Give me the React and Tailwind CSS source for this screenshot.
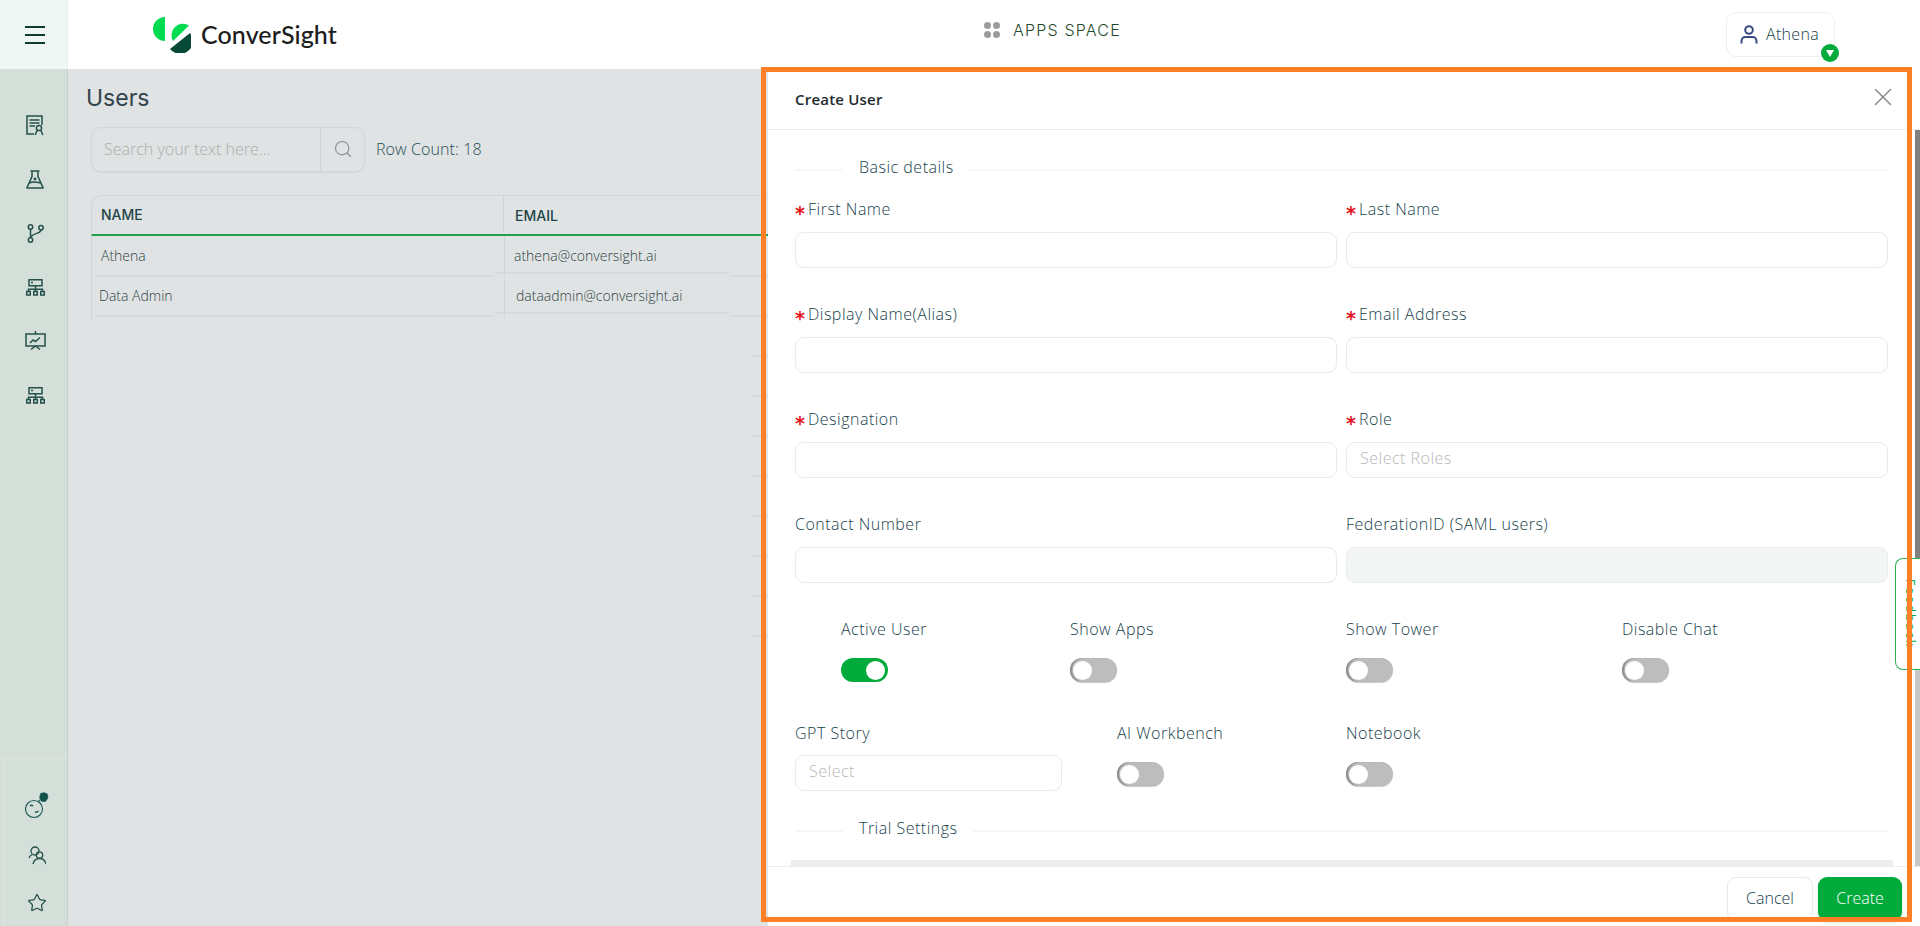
import React from "react";
import { Search, X, Star } from "lucide-react";

const iconCls = "text-[#23504a]";

const DocAward = () => (
  <svg width="18" height="21" viewBox="0 0 18 21" fill="none" stroke="currentColor" strokeWidth="1.5" className={iconCls}>
    <path d="M8 19H1V1h15v9" />
    <path d="M3.5 5h10M3.5 8h10M3.5 11h5.5" />
    <circle cx="13" cy="13" r="2.6" />
    <path d="M11 15.5L9.2 20M15 15.5L16.8 20" />
  </svg>
);
const Flask = () => (
  <svg width="18" height="19" viewBox="0 0 18 19" fill="none" stroke="currentColor" strokeWidth="1.5" className={iconCls}>
    <path d="M4.5 1h9M6 1v5.5L1 17.5a.3.3 0 0 0 .3.5h15.4a.3.3 0 0 0 .3-.5L12 6.5V1" />
    <path d="M3.5 13c3-1.5 7-1 11 0" />
    <circle cx="9" cy="9" r=".7" fill="currentColor" />
  </svg>
);
const Branch = () => (
  <svg width="17" height="19" viewBox="0 0 17 19" fill="none" stroke="currentColor" strokeWidth="1.5" className={iconCls}>
    <circle cx="3.5" cy="3" r="2.2" />
    <circle cx="14" cy="3.8" r="2.2" />
    <circle cx="3.5" cy="16" r="2.2" />
    <path d="M3.5 5.2v8.6M14 6c0 4-8 2.500-10.500 7.500" />
  </svg>
);
const Sitemap = () => (
  <svg width="19" height="17" viewBox="0 0 19 17" fill="none" stroke="currentColor" strokeWidth="1.5" className={iconCls}>
    <rect x="3" y=".75" width="13" height="6" />
    <path d="M5 3.500h2M9.500 6.750v6M2.500 13v-2.700h14V13" />
    <rect x=".75" y="12.500" width="3.500" height="3.500" />
    <rect x="7.750" y="12.500" width="3.500" height="3.500" />
    <rect x="14.750" y="12.500" width="3.500" height="3.500" />
  </svg>
);
const Board = () => (
  <svg width="21" height="20" viewBox="0 0 21 20" fill="none" stroke="currentColor" strokeWidth="1.5" className={iconCls}>
    <rect x="1" y="3" width="19" height="12" />
    <path d="M10.500 0v3M10.500 15l-4.500 3.500M10.500 15l4.500 3.500" />
    <path d="M5 12l3-3 2.500 1.500L15 6.500" />
  </svg>
);
const Face = () => (
  <svg width="24" height="27" viewBox="0 0 24 27" fill="none" stroke="#1c5a55" strokeWidth="1.1">
    <circle cx="9" cy="17" r="8.500" />
    <path d="M5 14c1-1 2-1 3 0M10 20c1.500.5 2.500 0 3.500-1" strokeWidth="1.4" />
    <path d="M13 10l2.500-2.500" />
    <path d="M14.500 5.500L15.500 1.500 19 .5 22.500 2l.5 4-2.500 3.500h-4z" fill="#12524b" strokeWidth=".5" />
  </svg>
);
const People = () => (
  <svg width="18" height="19" viewBox="0 0 18 19" fill="none" stroke="#23504a" strokeWidth="1.3">
    <circle cx="7" cy="5" r="4" />
    <path d="M1 12c.5-2 2-3 3.500-3.500" />
    <circle cx="11.500" cy="9" r="3.200" />
    <path d="M5 18c.8-3.500 3-5.500 6.500-5.500s5.700 2 6.500 5.500" />
  </svg>
);
const UserIcon = () => (
  <svg width="18" height="19" viewBox="0 0 18 19" fill="none" stroke="#3b4a80" strokeWidth="2">
    <circle cx="9" cy="5" r="3.800" />
    <path d="M1.500 18.500v-2.500c0-2.500 2-4 4-4h7c2 0 4 1.500 4 4v2.500" />
  </svg>
);
const Logo = () => (
  <svg width="38" height="37" viewBox="0 0 38 37">
    <path d="M12 1A12 12 0 0 0 12 25Z" fill="#00db50" />
    <path d="M36 9.500A11.500 11.500 0 0 0 20 25Z" fill="#00db50" />
    <path d="M37 17L17 33A12.500 12.500 0 0 0 37 17Z" fill="#064a37" />
  </svg>
);

const Toggle = ({ on }) =>
  on ? (
    <div className="flex h-[24px] w-[47px] items-center justify-end rounded-full bg-[#00ab3c] pr-[3px]">
      <div className="h-[19px] w-[19px] rounded-full bg-white" />
    </div>
  ) : (
    <div className="flex h-[24px] w-[47px] items-center rounded-full bg-[#bdbdbd] pl-[3px] shadow-[inset_2px_0_1px_#8f8f8f,0_1px_1px_#ccc]">
      <div className="h-[19px] w-[19px] rounded-full bg-white" />
    </div>
  );

const Label = ({ children, req }) => (
  <div className="flex h-[20px] items-center whitespace-nowrap text-[16px] font-light leading-[20px] tracking-[0.5px] text-[#17424c]">
    {req && (
      <span className="mr-[5px] w-[8px] translate-y-[4px] text-[19px] font-bold tracking-normal text-[#e8141c]" style={{ fontFamily: "'DejaVu Sans', sans-serif" }}>*</span>
    )}
    {children}
  </div>
);

const Field = ({ label, req, disabled, placeholder }) => (
  <div>
    <Label req={req}>{label}</Label>
    <div className={`mt-[13px] flex h-[36px] items-center rounded-[9px] border border-[#e5ebf0] px-[13px] pb-[5px] text-[16px] font-light tracking-[0.5px] text-[#b8b8b8] ${disabled ? "bg-[#f4f5f5]" : "bg-white"}`}>
      {placeholder}
    </div>
  </div>
);

const Section = ({ title }) => (
  <div className="flex h-[20px] items-center">
    <div className="mt-[6px] h-[2px] w-[48px] bg-[#f7f7f7]" />
    <div className="ml-[16px] mr-[15px] text-[16px] font-light leading-[20px] tracking-[0.5px] text-[#17424c]">{title}</div>
    <div className="mt-[6px] h-[2px] flex-1 bg-[#f7f7f7]" />
  </div>
);

const ToggleCell = ({ label, on }) => (
  <div>
    <Label>{label}</Label>
    <div className="mt-[19px]"><Toggle on={on} /></div>
  </div>
);

const RowLines = () => (
  <div className="flex h-[2px] border-l border-[#d2d6d6]">
    <div className="ml-[4px] w-[399px] bg-[#d6dada]" />
    <div className="h-[2px] w-[234px] -translate-y-[3px] bg-[#d6dada]" />
    <div className="w-[40px] bg-[#d6dada]" />
  </div>
);

export default function App() {
  return (
    <div className="relative flex h-screen w-screen flex-col overflow-hidden bg-[#dfe3e3]" style={{ fontFamily: "'Open Sans', sans-serif" }}>
      {/* header */}
      <header className="flex h-[69px] shrink-0 items-center bg-white">
        <div className="flex h-full w-[68px] shrink-0 flex-col items-center justify-center gap-[6px] border-r border-[#e8f0ec] bg-[#eef7f3] pl-[3px]">
          <div className="h-[2px] w-[20px] bg-[#0e3b30]" />
          <div className="h-[2px] w-[20px] bg-[#0e3b30]" />
          <div className="h-[2px] w-[20px] bg-[#0e3b30]" />
        </div>
        <div className="flex w-[916px] shrink-0 items-center pl-[85px]">
          <Logo />
          <span className="ml-[10px] text-[25px] font-medium tracking-[0.1px] text-[#1c1c1c]" style={{ fontFamily: "Lato, sans-serif" }}>ConverSight</span>
        </div>
        <div className="mb-[9px] flex items-center">
          <div className="grid grid-cols-2 gap-[2px]">
            <div className="h-[7px] w-[7px] rounded-full bg-[#9b9b9b]" />
            <div className="h-[7px] w-[7px] rounded-full bg-[#9b9b9b]" />
            <div className="h-[7px] w-[7px] rounded-full bg-[#9b9b9b]" />
            <div className="h-[7px] w-[7px] rounded-full bg-[#9b9b9b]" />
          </div>
          <span className="ml-[13px] text-[16px] font-light tracking-[1.2px] text-[#1f4a2a]" style={{ fontFamily: "Inter, sans-serif" }}>APPS SPACE</span>
        </div>
        <div className="relative ml-auto mr-[85px] flex h-[45px] w-[109px] items-center rounded-[10px] border border-[#eef0f0] pl-[13px]">
          <UserIcon />
          <span className="ml-[8px] pb-[1px] text-[16px] font-light tracking-[0.3px] text-[#17424c]">Athena</span>
          <div className="absolute left-[94px] top-[31px] flex h-[18px] w-[18px] items-center justify-center rounded-full bg-[#00ab3c]">
            <svg width="8" height="7" viewBox="0 0 8 7"><path d="M0 0h8L4 7z" fill="#fff" /></svg>
          </div>
        </div>
      </header>

      <div className="flex min-h-0 flex-1">
        {/* sidebar */}
        <aside className="flex w-[68px] shrink-0 flex-col items-center border-r border-[#c7d1cc] bg-[#d5dfda]">
          <div className="mt-[29px] flex flex-col items-center pl-[3px]">
            {[<DocAward />, <Flask />, <Branch />, <Sitemap />, <Board />, <Sitemap />].map((icon, i) => (
              <div key={i} className="flex h-[54px] items-center justify-center">{icon}</div>
            ))}
          </div>
          <div className="ml-[2px] mt-auto flex h-[168px] w-[64px] flex-col items-center border-l border-t border-[#dde6e1] pl-[3px] pt-[26px]">
            <div className="flex h-[48px] items-center justify-center pb-[6px]"><Face /></div>
            <div className="flex h-[48px] items-center justify-center"><People /></div>
            <div className="flex h-[48px] items-center justify-center"><Star size={20} strokeWidth={1.5} className="text-[#23504a]" /></div>
          </div>
        </aside>

        {/* main */}
        <main className="min-w-0 flex-1 pl-[18px]">
          <h1 className="mt-[15px] text-[23px] leading-[28px] text-[#30424a]" style={{ fontFamily: "Inter, sans-serif" }}>Users</h1>
          <div className="ml-[5px] mt-[15px] flex items-center">
            <div className="flex h-[45px] w-[274px] items-center rounded-[10px] border border-[#d2d6d6] shadow-[0_1px_1px_#d2d6d6]">
              <div className="flex-1 pb-[2px] pl-[12px] text-[16px] font-light text-[#a9aeae]">Search your text here...</div>
              <div className="flex h-full w-[44px] items-center justify-center border-l border-[#d2d6d6] pb-[2px]">
                <Search size={20} strokeWidth={1.4} className="text-[#8a8e8e]" />
              </div>
            </div>
            <span className="ml-[11px] pb-[2px] text-[16px] font-light tracking-[0.1px] text-[#1f4f58]">Row Count: 18</span>
          </div>

          {/* table */}
          <div className="ml-[5px] mt-[23px]">
            <div className="flex h-[41px] rounded-tl-[10px] border-b-2 border-l border-t border-[#22a052] border-l-[#d2d6d6] border-t-[#d2d6d6] text-[14px] font-medium text-[#1f4348]" style={{ fontFamily: "Inter, sans-serif" }}>
              <div className="flex w-[412px] items-center border-r border-[#d2d6d6] pb-[1px] pl-[9px]">NAME</div>
              <div className="flex flex-1 items-center pl-[11px] pt-[1px]">EMAIL</div>
            </div>
            <div className="flex h-[39px]">
              <div className="flex w-[413px] items-center border-l border-[#d2d6d6] pl-[9px] text-[14px] font-light text-[#2f4445]">Athena</div>
              <div className="flex flex-1 items-center border-l border-[#d2d6d6] pl-[9px] text-[14px] font-light text-[#2f4445]">athena@conversight.ai</div>
            </div>
            <RowLines />
            <div className="flex h-[38px]">
              <div className="flex w-[413px] items-center border-l border-[#d2d6d6] pb-[2px] pl-[7px] text-[14px] font-light text-[#2f4445]">Data Admin</div>
              <div className="flex flex-1 items-center border-l border-[#d2d6d6] pb-[2px] pl-[11px] text-[14px] font-light text-[#2f4445]">dataadmin@conversight.ai</div>
            </div>
            <RowLines />
            <div className="flex h-[3px]">
              <div className="w-[413px] border-l border-[#d2d6d6]" />
              <div className="border-l border-[#d2d6d6]" />
            </div>
            <div className="ml-[660px] mt-[35px] flex w-[17px] flex-col gap-[38px]">
              {[0, 1, 2, 3, 4, 5, 6, 7].map((i) => <div key={i} className="h-[2px] bg-[#d6dada]" />)}
            </div>
          </div>
        </main>
      </div>

      {/* drawer */}
      <div className="absolute bottom-0 left-[768px] right-0 top-[69px] flex flex-col overflow-hidden bg-white">
        <div className="flex h-[61px] shrink-0 items-center justify-between border-b border-[#ebeef0] pl-[27px] pr-[22px]">
          <span className="text-[15px] font-semibold tracking-[0.2px] text-[#1f2a30]">Create User</span>
          <X size={30} strokeWidth={1.2} className="mb-[5px] text-[#8a8a8a]" />
        </div>
        <div className="flex min-h-0 flex-1">
          <div className="min-w-0 flex-1 overflow-hidden pl-[27px] pr-[27px] pt-[27px]">
            <Section title="Basic details" />
            <div className="mt-[22px] grid grid-cols-[542px_542px] gap-x-[9px] gap-y-[36px]">
              <Field req label="First Name" />
              <Field req label="Last Name" />
              <Field req label="Display Name(Alias)" />
              <Field req label="Email Address" />
              <Field req label="Designation" />
              <Field req label="Role" placeholder="Select Roles" />
              <Field label="Contact Number" />
              <Field disabled label="FederationID (SAML users)" />
            </div>
            <div className="ml-[46px] mt-[36px] grid grid-cols-[229px_276px_276px_1fr]">
              <ToggleCell label="Active User" on />
              <ToggleCell label="Show Apps" />
              <ToggleCell label="Show Tower" />
              <ToggleCell label="Disable Chat" />
            </div>
            <div className="mt-[41px] grid grid-cols-[322px_229px_1fr]">
              <div>
                <Label>GPT Story</Label>
                <div className="mt-[12px] flex h-[36px] w-[267px] items-center rounded-[9px] border border-[#e5ebf0] px-[13px] pb-[5px] text-[16px] font-light tracking-[0.5px] text-[#b8b8b8]">Select</div>
              </div>
              <ToggleCell label="AI Workbench" />
              <ToggleCell label="Notebook" />
            </div>
            <div className="mt-[27px]"><Section title="Trial Settings" /></div>
            <div className="-ml-[4px] mt-[22px] h-[7px] w-[1102px] bg-[#eeeeee]" />
          </div>
          {/* scrollbar */}
          <div className="w-[5px] shrink-0 bg-[#c8c8c8]">
            <div className="h-[429px] bg-[#808080]" />
          </div>
        </div>
        <div className="flex h-[60px] shrink-0 justify-end gap-[5px] border-t border-[#ebeef0] pr-[18px] pt-[10px]">
          <button className="h-[44px] w-[86px] rounded-[9px] border border-[#e5ebf0] bg-white pb-[3px] text-[16px] font-light text-[#17424c]">Cancel</button>
          <button className="h-[44px] w-[84px] rounded-[9px] bg-[#00ab3c] pb-[3px] text-[16px] font-light text-white shadow-[0_2px_3px_#cfeeda]">Create</button>
        </div>
      </div>

      {/* feedback tab */}
      <div className="absolute right-0 top-[558px] flex h-[112px] w-[25px] items-center rounded-l-[8px] border-y border-l border-[#2fb350] bg-white pl-[8px]">
        <span className="text-[12px] leading-[12px] tracking-[2px] text-[#00ab3c] [writing-mode:vertical-rl]">Feedback</span>
      </div>

      {/* annotation frame */}
      <div className="pointer-events-none absolute left-[761px] top-[67px] h-[855px] w-[1151px] border-[5px] border-[#ff7f27]" />
    </div>
  );
}
